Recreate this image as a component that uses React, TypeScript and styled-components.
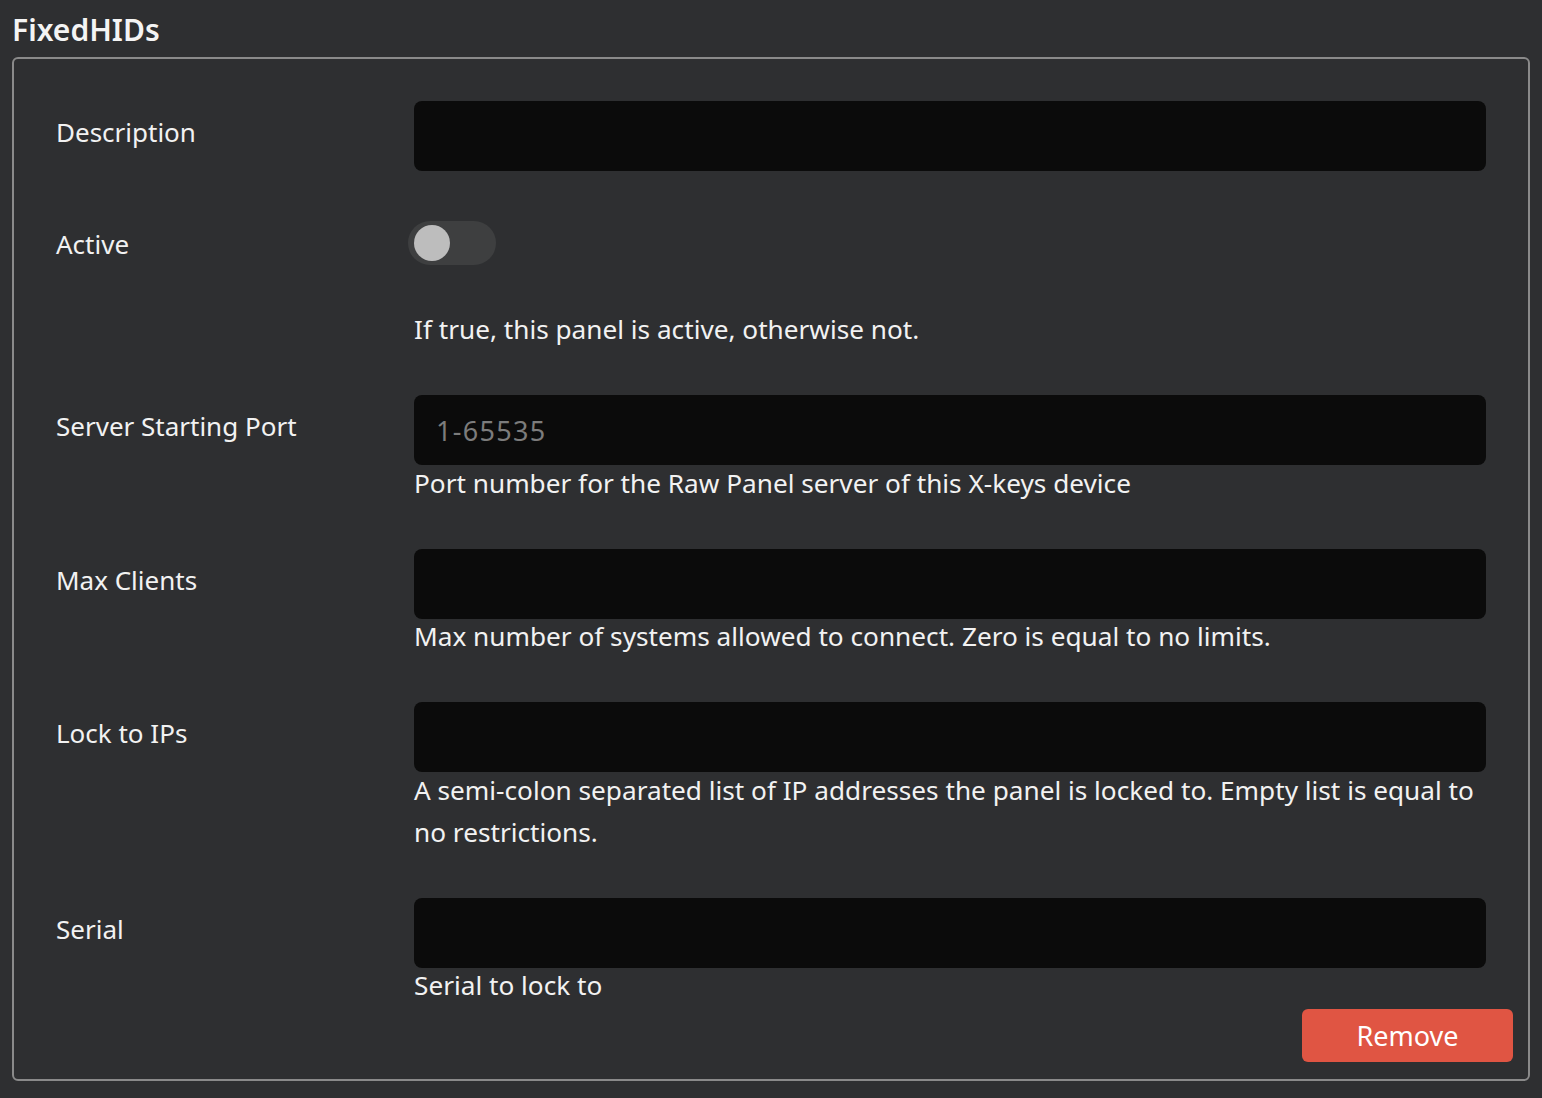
import styled, { createGlobalStyle } from 'styled-components';

const GlobalStyle = createGlobalStyle`
  html, body {
    margin: 0;
    padding: 0;
    background: #2e2f31;
  }
  body {
    font-family: 'Noto Sans', 'Open Sans', sans-serif;
    color: #f2f2f2;
  }
  * {
    box-sizing: border-box;
  }
`;

interface IField {
  label: string;
  kind: 'text' | 'toggle';
  placeholder?: string;
  help?: string;
}

const FIELDS: IField[] = [
  { label: 'Description', kind: 'text' },
  {
    label: 'Active',
    kind: 'toggle',
    help: 'If true, this panel is active, otherwise not.',
  },
  {
    label: 'Server Starting Port',
    kind: 'text',
    placeholder: '1-65535',
    help: 'Port number for the Raw Panel server of this X-keys device',
  },
  {
    label: 'Max Clients',
    kind: 'text',
    help: 'Max number of systems allowed to connect. Zero is equal to no limits.',
  },
  {
    label: 'Lock to IPs',
    kind: 'text',
    help: 'A semi-colon separated list of IP addresses the panel is locked to. Empty list is equal to no restrictions.',
  },
  { label: 'Serial', kind: 'text', help: 'Serial to lock to' },
];

export default function App() {
  return (
    <>
      <GlobalStyle />
      <Page>
        <Title>FixedHIDs</Title>
        <Box>
          {FIELDS.map((field) => (
            <Row key={field.label} $first={field.label === 'Description'}>
              <Label $toggle={field.kind === 'toggle'}>{field.label}</Label>
              <Control>
                {field.kind === 'toggle' ? (
                  <Switch>
                    <Knob />
                  </Switch>
                ) : (
                  <Input placeholder={field.placeholder} />
                )}
                {field.help && (
                  <Help $spaced={field.kind === 'toggle'}>{field.help}</Help>
                )}
              </Control>
            </Row>
          ))}
          <Footer>
            <RemoveButton>Remove</RemoveButton>
          </Footer>
        </Box>
      </Page>
    </>
  );
}

const Page = styled.div`
  padding: 8px 12px 16px 12px;
`;

const Title = styled.h2`
  margin: 0 0 6px 0;
  font-size: 30px;
  font-weight: 600;
  line-height: 43px;
  color: #f4f4f4;
`;

const Box = styled.div`
  border: 2px solid #8a8a8a;
  border-radius: 6px;
  padding: 42px 42px 17px 42px;
`;

const Row = styled.div<{ $first?: boolean }>`
  display: grid;
  grid-template-columns: 358px 1fr;
  margin-bottom: ${(p) => (p.$first ? '50px' : '45px')};
`;

const Label = styled.div<{ $toggle?: boolean }>`
  font-size: 26px;
  line-height: 42px;
  padding-top: ${(p) => (p.$toggle ? '2px' : '10px')};
  color: #f2f2f2;
`;

const Control = styled.div`
  display: flex;
  flex-direction: column;
  align-items: flex-start;
`;

const Input = styled.input`
  width: 100%;
  height: 70px;
  border: none;
  outline: none;
  border-radius: 8px;
  background: #0b0b0b;
  padding: 0 22px;
  font-family: inherit;
  font-size: 27px;
  letter-spacing: 1.3px;
  color: #f2f2f2;

  &::placeholder {
    color: #7c7c7c;
  }
`;

const Switch = styled.div`
  width: 88px;
  height: 44px;
  margin-left: -6px;
  border-radius: 22px;
  background: #3e3f40;
  display: flex;
  align-items: center;
  padding-left: 6px;
`;

const Knob = styled.span`
  width: 36px;
  height: 36px;
  border-radius: 50%;
  background: #bdbdbd;
`;

const Help = styled.div<{ $spaced?: boolean }>`
  margin-top: ${(p) => (p.$spaced ? '43px' : '-3.5px')};
  font-size: 26.2px;
  line-height: 42px;
  color: #f2f2f2;
`;

const Footer = styled.div`
  display: flex;
  justify-content: flex-end;
  margin-top: -42.5px;
  margin-right: -27px;
`;

const RemoveButton = styled.button`
  width: 211px;
  height: 53px;
  border: none;
  border-radius: 6px;
  background: #e05543;
  color: #ffffff;
  font-family: inherit;
  font-size: 27px;
  cursor: pointer;
`;
